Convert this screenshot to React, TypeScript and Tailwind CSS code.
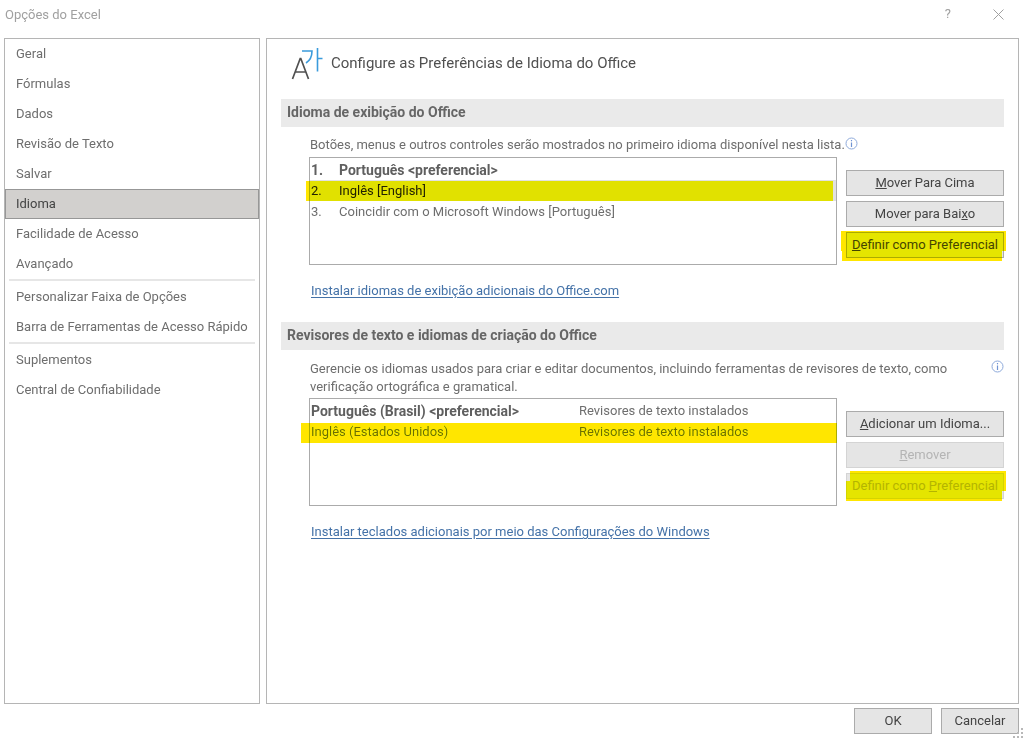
import React from 'react';
import { cx } from 'class-variance-authority';

const NAV_GROUPS = [
  ['Geral', 'Fórmulas', 'Dados', 'Revisão de Texto', 'Salvar', 'Idioma', 'Facilidade de Acesso', 'Avançado'],
  ['Personalizar Faixa de Opções', 'Barra de Ferramentas de Acesso Rápido'],
  ['Suplementos', 'Central de Confiabilidade'],
];

const DISPLAY_LANGUAGES = [
  { name: 'Português <preferencial>', preferred: true },
  { name: 'Inglês [English]', selected: true },
  { name: 'Coincidir com o Microsoft Windows [Português]' },
];

const AUTHORING_LANGUAGES = [
  { name: 'Português (Brasil) <preferencial>', proofing: 'Revisores de texto instalados', preferred: true },
  { name: 'Inglês (Estados Unidos)', proofing: 'Revisores de texto instalados' },
];

/** Yellow marker stroke laid over a row or a button. */
function Marker({ className }: { className: string }) {
  return <span aria-hidden className={cx('pointer-events-none absolute bg-[#ffe600] mix-blend-darken', className)} />;
}

function LanguageIcon() {
  return (
    <svg width="32" height="34" viewBox="0 0 32 34" fill="none" aria-hidden>
      <path d="M1.500 32 L9.200 11.500 H9.800 L17.500 32 M4.500 25 H14.500" stroke="#505050" strokeWidth="1.700" />
      <path d="M11 4 H21 C21 9.500 19 13.500 15 16" stroke="#3a9bdc" strokeWidth="1.600" />
      <path d="M26.500 1 V24.500 M26.500 11.500 H31.500" stroke="#3a9bdc" strokeWidth="1.600" />
    </svg>
  );
}

function InfoIcon() {
  return (
    <svg width="13" height="13" viewBox="0 0 13 13" fill="none" aria-hidden>
      <circle cx="6.500" cy="6.500" r="5.500" stroke="#8eaadb" />
      <path d="M6.500 5.500 V10" stroke="#6f93d2" strokeWidth="1.200" />
      <path d="M6.500 3 V4.300" stroke="#6f93d2" strokeWidth="1.200" />
    </svg>
  );
}

interface DialogButtonProps {
  children: React.ReactNode;
  disabled?: boolean;
  className?: string;
}

function DialogButton({ children, disabled, className }: DialogButtonProps) {
  return (
    <button
      type="button"
      disabled={disabled}
      className={cx(
        'flex items-center justify-center whitespace-nowrap border bg-[#e5e5e5]',
        disabled ? 'border-[#d4d4d4] text-[#b4b4b4]' : 'border-[#ababab] text-[#444444]',
        className ?? 'h-[26px] w-full',
      )}
    >
      <span>{children}</span>
    </button>
  );
}

function SectionTitle({ children }: { children: React.ReactNode }) {
  return <h2 className="h-7 bg-[#eaeaea] px-1.5 pt-[3px] text-sm font-bold text-[#666666]">{children}</h2>;
}

function Sidebar() {
  return (
    <nav className="w-64 shrink-0 border border-[#b5b5b5]">
      {NAV_GROUPS.map((group, i) => (
        <ul key={i} className={cx(i > 0 && 'relative pt-[3px]')}>
          {i > 0 && <li aria-hidden className="absolute inset-x-1 top-0 h-0.5 bg-[#e6e6e6]" />}
          {group.map((label) => (
            <li key={label}>
              <button
                type="button"
                className={cx(
                  'flex h-[30px] w-full items-center whitespace-nowrap border px-2.5 text-left',
                  label === 'Idioma' ? 'border-[#979797] bg-[#d2d0ce] text-[#444444]' : 'border-transparent',
                )}
              >
                {label}
              </button>
            </li>
          ))}
        </ul>
      ))}
    </nav>
  );
}

function DisplayLanguageSection() {
  return (
    <section>
      <SectionTitle>Idioma de exibição do Office</SectionTitle>
      <div className="pl-7 pt-2">
        <div className="flex h-[22px] items-start whitespace-nowrap">
          <p className="pl-px">Botões, menus e outros controles serão mostrados no primeiro idioma disponível nesta lista.</p>
          <button type="button" aria-label="Informações" className="pt-0.5">
            <InfoIcon />
          </button>
        </div>
        <div className="flex gap-[9px]">
          <div className="relative h-[108px] flex-1 border border-[#ababab] pt-px">
            <ol>
              {DISPLAY_LANGUAGES.map((lang, i) => (
                <li
                  key={lang.name}
                  className={cx(
                    'flex h-[21px] items-center px-px',
                    lang.preferred && 'text-sm font-bold text-[#5f5f5f]',
                    lang.selected && 'bg-[#e1e1e1] text-[#222222]',
                  )}
                >
                  <span className="w-7">{i + 1}.</span>
                  <span>{lang.name}</span>
                </li>
              ))}
            </ol>
            <Marker className="-left-1 right-[3px] top-[23px] h-5" />
          </div>
          <div className="flex w-[158px] flex-col gap-[5px] pt-[13px]">
            <DialogButton>
              <u>M</u>over Para Cima
            </DialogButton>
            <DialogButton>
              Mover para Bai<u>x</u>o
            </DialogButton>
            <div className="relative">
              <DialogButton>
                <u>D</u>efinir como Preferencial
              </DialogButton>
              <Marker className="-left-[5px] -right-0.5 -top-px h-5" />
              <Marker className="-left-1 right-0.5 top-[9px] h-5" />
            </div>
          </div>
        </div>
        <a href="#idiomas" className="ml-0.5 mt-4 inline-block text-[#4472a8] underline underline-offset-2">
          Instalar idiomas de exibição adicionais do Office.com
        </a>
      </div>
    </section>
  );
}

function AuthoringLanguageSection() {
  return (
    <section className="mt-[21px]">
      <SectionTitle>Revisores de texto e idiomas de criação do Office</SectionTitle>
      <div className="pl-7 pt-2.5">
        <div className="flex items-start justify-between">
          <p className="max-w-[660px] pl-px leading-[18px]">
            Gerencie os idiomas usados para criar e editar documentos, incluindo ferramentas de revisores de texto, como
            verificação ortográfica e gramatical.
          </p>
          <button type="button" aria-label="Informações">
            <InfoIcon />
          </button>
        </div>
        <div className="mt-0.5 flex gap-[9px]">
          <div className="relative h-[108px] flex-1 border border-[#ababab] pt-px">
            <table className="w-full table-fixed">
              <tbody>
                {AUTHORING_LANGUAGES.map((lang) => (
                  <tr key={lang.name} className="h-[21px]">
                    <td className={cx('w-[268px] px-px', lang.preferred && 'text-sm font-bold text-[#5f5f5f]')}>
                      {lang.name}
                    </td>
                    <td className="px-px">{lang.proofing}</td>
                  </tr>
                ))}
              </tbody>
            </table>
            <Marker className="-left-[9px] -right-px top-6 h-5" />
          </div>
          <div className="flex w-[158px] flex-col gap-[5px] pt-[13px]">
            <DialogButton>
              <u>A</u>dicionar um Idioma...
            </DialogButton>
            <DialogButton disabled>
              <u>R</u>emover
            </DialogButton>
            <div className="relative">
              <DialogButton disabled>
                Definir como <u>P</u>referencial
              </DialogButton>
              <Marker className="-right-0.5 -top-0.5 left-1 h-5" />
              <Marker className="left-0 right-0.5 top-2 h-5" />
            </div>
          </div>
        </div>
        <a href="#teclados" className="ml-0.5 mt-4 inline-block text-[#4472a8] underline underline-offset-2">
          Instalar teclados adicionais por meio das Configurações do Windows
        </a>
      </div>
    </section>
  );
}

export default function App() {
  return (
    <div className="flex min-h-screen flex-col bg-white font-['Roboto','Noto_Sans',sans-serif] text-[13px] leading-5 text-[#6e6e6e]">
      <header className="flex h-[38px] items-start justify-between pl-[5px] pr-5 pt-1 text-[#a0a0a0]">
        <h1 className="leading-[22px]">Opções do Excel</h1>
        <div className="flex items-center gap-[42px]">
          <button type="button" aria-label="Ajuda">
            ?
          </button>
          <button type="button" aria-label="Fechar">
            <svg width="11" height="11" viewBox="0 0 11 11" stroke="#a0a0a0" aria-hidden>
              <path d="M0.500 0.500 L10.500 10.500 M10.500 0.500 L0.500 10.500" />
            </svg>
          </button>
        </div>
      </header>

      <div className="flex flex-1 gap-1.5 pl-1 pr-[5px]">
        <Sidebar />
        <main className="flex-1 border border-[#b5b5b5] pl-3.5 pr-3.5">
          <div className="flex h-[60px] items-start gap-2 pl-2.5 pt-2">
            <LanguageIcon />
            <p className="pt-1.5 text-[15px] text-[#505050]">Configure as Preferências de Idioma do Office</p>
          </div>
          <DisplayLanguageSection />
          <AuthoringLanguageSection />
        </main>
      </div>

      <footer className="relative flex h-[35px] items-start justify-end gap-[9px] pr-[5px] pt-1">
        <DialogButton className="h-[26px] w-[78px]">OK</DialogButton>
        <DialogButton className="h-[26px] w-[78px]">Cancelar</DialogButton>
        {/* Resize grip */}
        <svg width="11" height="11" viewBox="0 0 11 11" fill="#b8b8b8" className="absolute bottom-0 right-0" aria-hidden>
          <path d="M8 0h2v2h-2z M4 4h2v2h-2z M8 4h2v2h-2z M0 8h2v2h-2z M4 8h2v2h-2z M8 8h2v2h-2z" />
        </svg>
      </footer>
    </div>
  );
}
